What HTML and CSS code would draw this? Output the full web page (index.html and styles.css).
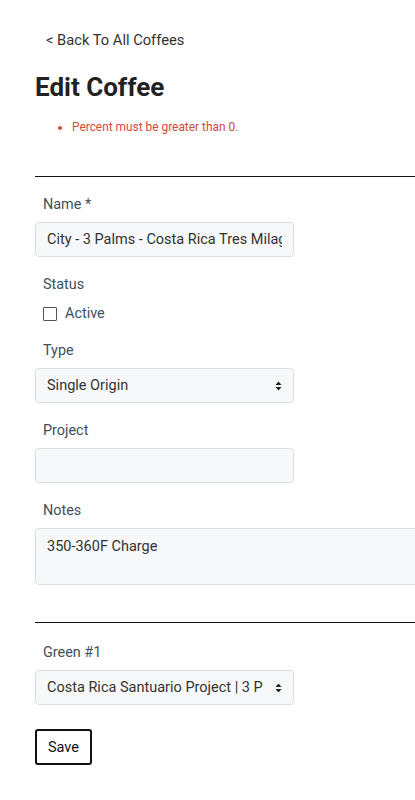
FILE: index.html
```html
<!DOCTYPE html>
<html lang="en">
<head>
<meta charset="utf-8">
<title>Edit Coffee</title>
<link rel="stylesheet" href="styles.css">
</head>
<body>
<div class="page">
  <a class="back" href="#">&lt; Back To All Coffees</a>
  <h1 class="title">Edit Coffee</h1>
  <ul class="errors">
    <li>Percent must be greater than 0.</li>
  </ul>
  <hr class="rule">
  <form class="form">
    <div class="field">
      <label class="label">Name *</label>
      <input class="control" type="text" value="City - 3 Palms - Costa Rica Tres Milagros">
    </div>
    <div class="field">
      <span class="label">Status</span>
      <label class="check"><span class="box"></span><span>Active</span></label>
    </div>
    <div class="field field-tight">
      <label class="label">Type</label>
      <div class="control select"><span>Single Origin</span><svg class="arrows" width="7" height="10" viewBox="0 0 7 10"><path d="M3.5 0.5L6.5 4H0.5Z M3.5 9.5L6.5 6H0.5Z" fill="#222"/></svg></div>
    </div>
    <div class="field">
      <label class="label">Project</label>
      <input class="control" type="text" value="">
    </div>
    <div class="field">
      <label class="label">Notes</label>
      <div class="control notes">350-360F Charge</div>
    </div>
    <hr class="rule rule2">
    <div class="field">
      <label class="label">Green #1</label>
      <div class="control select"><span class="clip">Costa Rica Santuario Project | 3 P</span><svg class="arrows" width="7" height="10" viewBox="0 0 7 10"><path d="M3.5 0.5L6.5 4H0.5Z M3.5 9.5L6.5 6H0.5Z" fill="#222"/></svg></div>
    </div>
    <button class="save" type="button">Save</button>
  </form>
</div>
</body>
</html>
```

FILE: styles.css
```css
html, body {
  margin: 0;
  padding: 0;
  background: #fff;
  overflow-x: hidden;
}
body {
  font-family: Roboto, "Liberation Sans", sans-serif;
  color: #333;
}
.page {
  padding: 30px 0 0 35px;
}
.back {
  display: block;
  margin-left: 11px;
  font-size: 14.7px;
  line-height: 20px;
  color: #333;
  text-decoration: none;
}
.title {
  margin: 21px 0 0;
  font-size: 26px;
  font-weight: 700;
  line-height: 32px;
  color: #222;
}
.errors {
  margin: 16px 0 0;
  padding-left: 37px;
  font-size: 11.9px;
  line-height: 16px;
  color: #d14a3a;
}
.rule {
  margin: 41px 0 0;
  border: 0;
  border-top: 1px solid #111;
}
.form {
  display: flex;
  flex-direction: column;
}
.field {
  display: flex;
  flex-direction: column;
  align-items: flex-start;
  margin-top: 16px;
}
.field-tight {
  margin-top: 15px;
}
.label {
  margin-left: 8px;
  padding-top: 2px;
  font-size: 14.4px;
  line-height: 20px;
  color: #3e5059;
  margin-bottom: 7px;
}
.control {
  box-sizing: border-box;
  width: 259px;
  height: 35px;
  padding: 0 11px;
  font-family: Roboto, "Liberation Sans", sans-serif;
  font-size: 14.5px;
  color: #333;
  background: #f7f8fa;
  border: 1px solid #dcdfe2;
  border-radius: 4px;
  outline: none;
}
.select {
  display: flex;
  align-items: center;
  justify-content: space-between;
  gap: 6px;
  padding-right: 11px;
}
.clip {
  overflow: hidden;
  white-space: nowrap;
}
.arrows {
  flex: none;
}
.notes {
  width: 400px;
  height: 57px;
  padding-top: 9px;
  line-height: 18px;
}
.check {
  display: flex;
  align-items: center;
  gap: 8px;
  margin-left: 8px;
  margin-top: 2px;
  font-size: 14.4px;
  line-height: 20px;
  color: #3e5059;
}
.box {
  box-sizing: border-box;
  width: 14px;
  height: 14px;
  border: 1px solid #555;
  border-radius: 1px;
}
.rule2 {
  margin-top: 37px;
  margin-bottom: 2px;
}
.save {
  align-self: flex-start;
  margin-top: 24px;
  box-sizing: border-box;
  width: 57px;
  height: 36px;
  background: #fff;
  border: 2px solid #111;
  border-radius: 3px;
  font-family: Roboto, "Liberation Sans", sans-serif;
  font-size: 14.5px;
  color: #111;
  padding: 0;
}
```
